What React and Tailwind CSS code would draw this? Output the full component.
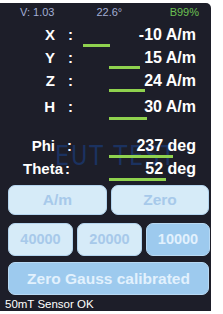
import React from 'react';

const rows = [
  { label: 'X', value: '-10 A/m', mt: 'mt-[24px]', barMt: 'mt-[1px]', from: 83, to: 110, lw: 'w-[55px]', gap: 'ml-[13px]' },
  { label: 'Y', value: '15 A/m', mt: 'mt-[3px]', barMt: 'mt-0', from: 109, to: 140, lw: 'w-[55px]', gap: 'ml-[13px]' },
  { label: 'Z', value: '24 A/m', mt: 'mt-[4px]', barMt: 'mt-0', from: 109, to: 145, lw: 'w-[55px]', gap: 'ml-[13px]' },
  { label: 'H', value: '30 A/m', mt: 'mt-[7px]', barMt: 'mt-[2px]', from: 109, to: 147, lw: 'w-[55px]', gap: 'ml-[13px]' },
  { label: 'Phi', value: '237 deg', mt: 'mt-[18px]', barMt: 'mt-[1px]', from: 109, to: 173, lw: 'w-[55px]', gap: 'ml-[12px]' },
  { label: 'Theta', value: '52 deg', mt: 'mt-[3px]', barMt: 'mt-[1px]', from: 109, to: 166, lw: 'w-[63px]', gap: 'ml-[2px]' },
];

const Reading = ({ r }) => (
  <div className={r.mt}>
    <div className="flex h-[16px] items-center font-bold leading-[16px] text-white">
      <span className={`${r.lw} text-right text-[15px]`}>{r.label}</span>
      <span className={`${r.gap} text-[15px]`}>:</span>
      <span className="flex-1 pr-[15px] text-right text-[16px]">{r.value}</span>
    </div>
    <div className={`${r.barMt} h-[3px] bg-[#8fd24e]`} style={{ marginLeft: r.from, width: r.to - r.from }} />
  </div>
);

const Btn = ({ children, active, className = '' }) => (
  <div
    className={`flex items-center justify-center rounded-[7px] border-[1.5px] font-bold ${
      active ? 'border-[#b7d9f4] bg-[#9dcaee] text-[#e2f1fd]' : 'border-[#b4d4ee] bg-[#d6ebf8] text-[#a7c9ea]'
    } ${className}`}
  >
    {children}
  </div>
);

export default function App() {
  return (
    <div className="h-[314px] w-[223px] bg-white pt-[3px]" style={{ fontFamily: '"Liberation Sans", Arial, sans-serif' }}>
      <div className="relative h-[308px] w-[211px] overflow-hidden rounded-tr-[5px] bg-[#1d1e29]">
        <div
          className="pointer-events-none absolute left-[55px] top-[138px] whitespace-nowrap text-[27px] leading-[30px] tracking-[2px] text-[#1b3260]"
          style={{ fontFamily: '"DejaVu Sans Condensed", sans-serif', transform: 'scaleX(0.92)', transformOrigin: 'left' }}
        >
          EUT TEST
        </div>
        <div className="relative">
          <div className="flex h-[14px] items-center pt-[4px] text-[11px] leading-[12px]">
            <span className="ml-[20px] text-[#a3aed4]">V: 1.03</span>
            <span className="ml-[42px] text-[#a3aed4]">22.6°</span>
            <span className="ml-auto mr-[12px] text-[#6cc052]">B99%</span>
          </div>
          <div className="-mt-[14px]">
            {rows.map((r) => (
              <Reading key={r.label} r={r} />
            ))}
          </div>
          <div className="mt-[4px] flex gap-[4px] pl-[8px] pr-[2px]">
            <Btn className="h-[30px] w-[99px] text-[15.5px]">A/m</Btn>
            <Btn className="h-[30px] w-[98px] text-[15.5px]">Zero</Btn>
          </div>
          <div className="mt-[8px] flex gap-[4px] pl-[8px]">
            <Btn className="h-[33px] w-[65px] text-[14.5px]">40000</Btn>
            <Btn className="h-[33px] w-[65px] text-[14.5px]">20000</Btn>
            <Btn active className="h-[33px] w-[64px] text-[14.5px]">10000</Btn>
          </div>
          <div className="mt-[6px] pl-[8px]">
            <Btn active className="h-[33px] w-[201px] text-[15.5px]">Zero Gauss calibrated</Btn>
          </div>
          <div className="mt-[2px] pl-[5px] text-[11.5px] leading-[14px] text-white">50mT Sensor OK</div>
        </div>
      </div>
    </div>
  );
}
